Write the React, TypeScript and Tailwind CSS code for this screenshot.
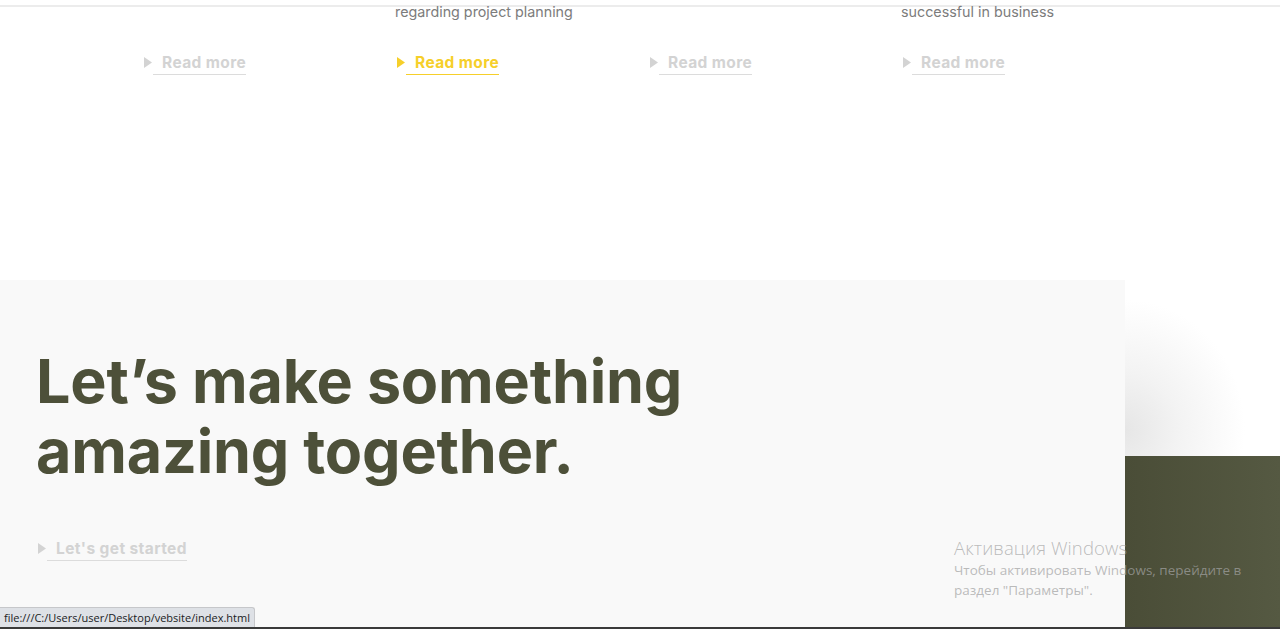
import { type ReactNode } from 'react'

const columns = [
  { text: '', active: false },
  { text: 'regarding project planning', active: true },
  { text: '', active: false },
  { text: 'successful in business', active: false },
]

function Arrow({ className }: { className: string }) {
  return (
    <svg width="8" height="11" viewBox="0 0 8 11" className={className}>
      <path d="M0 0 L8 5.5 L0 11 Z" fill="currentColor" />
    </svg>
  )
}

function ArrowLink({ children, active }: { children: ReactNode; active?: boolean }) {
  const color = active ? 'text-[#f6cf2a]' : 'text-[#d3d3d3]'
  return (
    <a href="#" className={`relative inline-flex items-center ${color}`}>
      <Arrow className="absolute -left-[9px] top-[4px]" />
      <span
        className={`pl-[9px] pb-[1px] border-b-[1.5px] ${
          active ? 'border-[#f6cf2a]' : 'border-[#dcdcdc]'
        } text-[15.5px] font-bold leading-[20px] tracking-[0.4px]`}
      >
        {children}
      </span>
    </a>
  )
}

export default function App() {
  return (
    <div className="relative h-[629px] w-full overflow-hidden bg-white font-['Inter',sans-serif]">
      {/* Services strip */}
      <div className="h-[5px]" />
      <div className="border-t-[2px] border-[#ececec]" />
      <div className="grid grid-cols-[253px_253px_253px_253px] pl-[142px] h-[273px]">
        {columns.map((c, i) => (
          <div key={i} className="flex flex-col">
            <p className="-mt-[5px] h-[20px] text-[14.3px] leading-[20px] text-[#7c7c7c]">
              {c.text}
            </p>
            <div className="mt-[28px] pl-[11px]">
              <ArrowLink active={c.active}>Read more</ArrowLink>
            </div>
          </div>
        ))}
      </div>

      {/* CTA */}
      <div className="flex h-[349px]">
        <div className="w-[1125px] bg-[#f9f9f9] pl-[36px] pt-[66px]">
          <h2 className="text-[61px] font-bold leading-[70px] tracking-[-0.2px] text-[#4d5039]">
            Let’s make something
            <br />
            amazing together.
          </h2>
          <div className="mt-[50px] pl-[11px]">
            <ArrowLink>Let's get started</ArrowLink>
          </div>
        </div>
        <div className="flex flex-1 flex-col">
          <div className="h-[176px] bg-[radial-gradient(ellipse_120px_130px_at_0%_85%,#e6e6e6,#f3f3f3_45%,#ffffff_100%)]" />
          <div className="flex-1 bg-gradient-to-r from-[#4a4d37] to-[#555942]" />
        </div>
      </div>

      {/* Windows watermark */}
      <div className="pointer-events-none absolute left-[954px] top-[535px] font-['Open_Sans',sans-serif] text-[rgba(162,162,162,0.72)]">
        <div className="text-[18.5px] font-light leading-[25px] tracking-[0.1px]">Активация Windows</div>
        <div className="text-[13.5px] leading-[20px]">Чтобы активировать Windows, перейдите в</div>
        <div className="text-[13.5px] leading-[20px]">раздел "Параметры".</div>
      </div>

      {/* Browser status bar */}
      <div className="absolute bottom-[2px] left-0 rounded-tr-[3px] border-t border-r border-[#c6c7ca] bg-[#dee1e6] px-[4px] py-[2px] font-['Open_Sans',sans-serif] text-[11px] leading-[15px] text-[#202124]">
        file:///C:/Users/user/Desktop/vebsite/index.html
      </div>
      <div className="absolute bottom-0 left-0 right-0 h-[2px] bg-[#3a3a3a]" />
    </div>
  )
}
